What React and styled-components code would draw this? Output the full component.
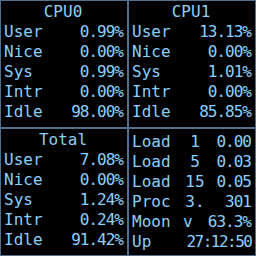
import React from "react";
import styled, { createGlobalStyle } from "styled-components";

const c_text = "#8ad0fc";
const c_border = "#50708c";

const GlobalStyle = createGlobalStyle`
  html, body {
    margin: 0;
    padding: 0;
    background: #000;
  }
`;

const Root = styled.div`
  width: 256px;
  height: 256px;
  display: grid;
  grid-template-columns: 128px 128px;
  grid-template-rows: 128px 128px;
  background: #000;
  color: ${c_text};
  font-family: "DejaVu Sans Mono", monospace;
  font-size: 16px;
  line-height: 20px;
`;

const Panel = styled.div`
  box-sizing: border-box;
  border: 1px solid ${c_border};
  padding: ${(props) => (props.padTop ? props.padTop : "1px")} 5px 0 3px;
  display: flex;
  flex-direction: column;
  overflow: hidden;
`;

const Title = styled.div`
  text-align: center;
  height: 20px;
`;

const Row = styled.div`
  display: flex;
  justify-content: space-between;
  height: 20px;
  white-space: pre;
`;

const Label = styled.span`
  flex: none;
  width: ${(props) => (props.fixed ? "51px" : "auto")};
`;

const Value = styled.span`
  letter-spacing: -1px;
  margin-right: -1px;
`;

const InfoRow = styled.div`
  display: flex;
  height: 20px;
  white-space: pre;
`;

const Mid = styled.span`
  flex: none;
  width: 24px;
  text-align: ${(props) => (props.align ? props.align : "center")};
`;

const RightValue = styled.span`
  flex: 1;
  min-width: 0;
  text-align: right;
  letter-spacing: ${(props) => (props.tight ? "-1.5px" : "-1px")};
  margin-right: ${(props) => (props.tight ? "-1.5px" : "-1px")};
`;

const cpuPanels = [
  {
    title: "CPU0",
    rows: [
      ["User", "0.99%"],
      ["Nice", "0.00%"],
      ["Sys", "0.99%"],
      ["Intr", "0.00%"],
      ["Idle", "98.00%"],
    ],
  },
  {
    title: "CPU1",
    rows: [
      ["User", "13.13%"],
      ["Nice", "0.00%"],
      ["Sys", "1.01%"],
      ["Intr", "0.00%"],
      ["Idle", "85.85%"],
    ],
  },
  {
    title: "Total",
    rows: [
      ["User", "7.08%"],
      ["Nice", "0.00%"],
      ["Sys", "1.24%"],
      ["Intr", "0.24%"],
      ["Idle", "91.42%"],
    ],
  },
];

const info = [
  ["Load", "1", "0.00"],
  ["Load", "5", "0.03"],
  ["Load", "15", "0.05"],
  ["Proc", "3.", "301"],
  ["Moon", "v", "63.3%", "left"],
  ["Up", "", "27:12:50"],
];

const CpuPanel = ({ title, rows }) => (
  <Panel>
    <Title>{title}</Title>
    {rows.map((row, index) => (
      <Row key={index}>
        <Label>{row[0]}</Label>
        <Value>{row[1]}</Value>
      </Row>
    ))}
  </Panel>
);

const App = () => {
  return (
    <>
      <GlobalStyle />
      <Root>
        <CpuPanel {...cpuPanels[0]} />
        <CpuPanel {...cpuPanels[1]} />
        <CpuPanel {...cpuPanels[2]} />
        <Panel padTop="3px">
          {info.map((item, index) => (
            <InfoRow key={index}>
              <Label fixed={item[1] !== ""}>{item[0]}</Label>
              {item[1] !== "" ? <Mid align={item[3]}>{item[1]}</Mid> : null}
              <RightValue tight={item[1] === ""}>{item[2]}</RightValue>
            </InfoRow>
          ))}
        </Panel>
      </Root>
    </>
  );
};

export default App;
